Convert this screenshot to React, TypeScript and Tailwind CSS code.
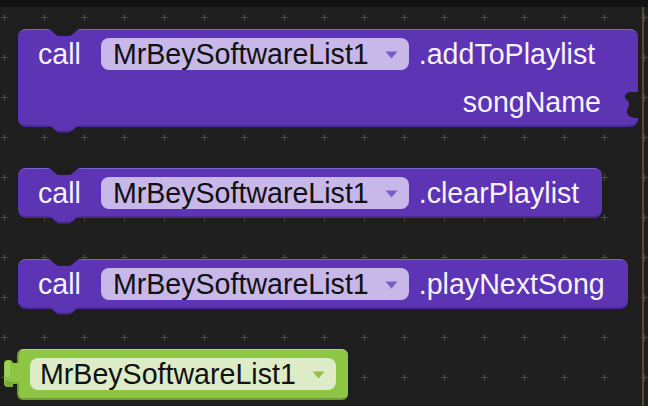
import React from "react";

const font = { fontFamily: '"Liberation Sans", Arial, sans-serif' };

const Grid = () => (
  <svg className="absolute inset-0" width="648" height="406">
    <defs>
      <pattern id="plus" width="40" height="40" patternUnits="userSpaceOnUse" x="-16" y="-3">
        <rect x="17" y="20" width="7" height="1" fill="#4a4a4a" />
        <rect x="20" y="17" width="1" height="7" fill="#4a4a4a" />
      </pattern>
    </defs>
    <rect x="0" y="0" width="648" height="406" fill="url(#plus)" />
  </svg>
);

// top notch cut out of a statement block
const Notch = () => (
  <svg width="34" height="8" viewBox="0 0 34 8" className="absolute -top-px left-[29px]">
    <path d="M0 0 C6 0 7 7 13 7 L21 7 C27 7 28 0 34 0 Z" fill="#1e1e1e" />
  </svg>
);

// bottom bump of a statement block
const Bump = () => (
  <svg width="34" height="8" viewBox="0 0 34 8" className="absolute top-full left-[29px]">
    <path d="M0 0 C6 0 7 7.5 13 7.5 L21 7.5 C27 7.5 28 0 34 0 Z" fill="#4b2a98" />
    <path d="M0 0 C6 0 7 5.5 13 5.5 L21 5.5 C27 5.5 28 0 34 0 Z" fill="#5c34b4" />
  </svg>
);

const Arrow = ({ color }: { color: string }) => (
  <svg width="13" height="8" viewBox="0 0 13 8" className="ml-[16px] mt-[2px]">
    <path d="M0.5 0.5 L12.5 0.5 L6.5 7.5 Z" fill={color} />
  </svg>
);

const Pill = () => (
  <div className="flex items-center h-[32px] ml-[20px] pl-[12px] pr-[11px] rounded-[8px] bg-[#c7b8e9] text-[#111]">
    <span>MrBeySoftwareList1</span>
    <Arrow color="#7b5cc9" />
  </div>
);

const CallRow = ({ method }: { method: string }) => (
  <div className="flex items-center h-[32px] mt-[8px]">
    <span className="pl-[20px] text-[#f6f3ff]">call</span>
    <Pill />
    <span className="ml-[10px] text-[#f6f3ff]">{method}</span>
  </div>
);

const CallBlock = ({ method, className }: { method: string; className: string }) => (
  <div
    className={
      "relative h-[50px] pr-[23px] rounded-[8px] bg-[#5c34b4] border-t border-[#7d60d4] border-b-2 border-b-[#4b2a98] " +
      className
    }
  >
    <Notch />
    <CallRow method={method} />
    <Bump />
  </div>
);

export default function App() {
  return (
    <div
      className="relative w-[648px] h-[406px] overflow-hidden bg-[#1e1e1e] text-[28.6px] leading-none"
      style={font}
    >
      <Grid />
      <div className="absolute left-0 top-0 w-full h-[7px] bg-[#111111]" />
      <div className="absolute left-[642px] top-[7px] w-[2px] h-full bg-[#5a4833]" />

      <div className="relative flex flex-col items-start">
        {/* addToPlaylist with argument */}
        <div className="relative ml-[18px] mt-[29px] w-[620px] h-[98px] rounded-[8px] bg-[#5c34b4] border-t border-[#7d60d4] border-b-2 border-b-[#4b2a98]">
          <Notch />
          <CallRow method=".addToPlaylist" />
          <div className="flex items-center justify-end h-[34px] mt-[15px] pr-[37px] text-[#f6f3ff]">
            songName
          </div>
          <svg width="16" height="26" viewBox="0 0 16 26" className="absolute right-[-1px] top-[62px]">
            <path
              d="M16 0 L10 0 C4 0 2 2 2 5 C2 8 6 8 6 12 C6 16 4 16 4 20 C4 24 8 26 16 26 Z"
              fill="#1e1e1e"
            />
          </svg>
          <Bump />
        </div>

        <CallBlock method=".clearPlaylist" className="ml-[18px] mt-[41px]" />
        <CallBlock method=".playNextSong" className="ml-[18px] mt-[41px]" />

        {/* component getter block */}
        <div className="relative ml-[17px] mt-[40px] h-[51px] pl-[11px] pr-[12px] flex items-center rounded-[6px] bg-[#8dc544] border-t border-[#a9d86e] border-b-2 border-b-[#6f9d33] border-l-2 border-l-[#6f9d33]">
          <svg width="15" height="28" viewBox="0 0 15 28" className="absolute right-full top-[10px]">
            <rect x="0" y="0" width="9" height="27" rx="4" fill="#8dc544" />
            <rect x="7" y="3" width="8" height="21" fill="#8dc544" />
            <rect x="1" y="1" width="5" height="16" rx="2.5" fill="#9fd35c" />
            <path d="M1 20 C1 25 3 27 5 27 L9 27 L9 24 L15 24 L15 22 L9 22 Z" fill="#7aae36" />
          </svg>
          <div className="flex items-center h-[32px] pl-[10px] pr-[11px] rounded-[8px] bg-[#ddebc6] text-[#111]">
            <span>MrBeySoftwareList1</span>
            <Arrow color="#8fbf4e" />
          </div>
        </div>
      </div>
    </div>
  );
}
